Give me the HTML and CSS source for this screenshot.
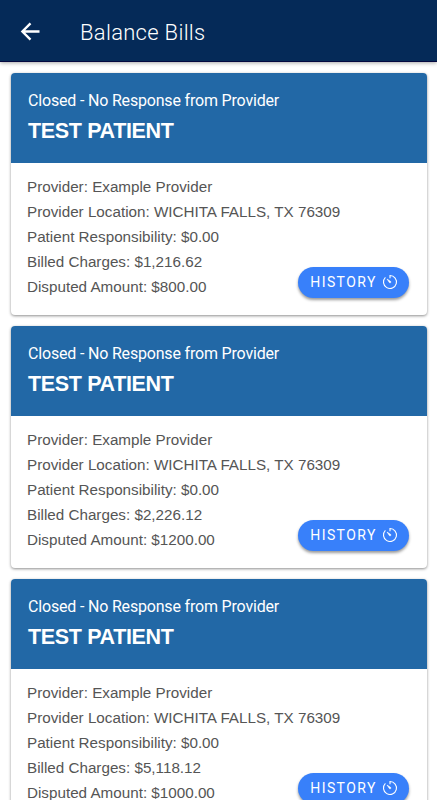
FILE: index.html
```html
<!DOCTYPE html>
<html lang="en">
<head>
<meta charset="utf-8">
<title>Balance Bills</title>
<link rel="stylesheet" href="styles.css">
</head>
<body>
<header class="bar">
  <svg class="back" viewBox="0 0 24 24"><path d="M20 12H5M12 4.8 4.8 12l7.2 7.2"/></svg>
  <h1>Balance Bills</h1>
</header>
<main class="list">
  <article class="card">
    <div class="head"><p>Closed - No Response from Provider</p><h2>TEST PATIENT</h2></div>
    <div class="body">
      <p>Provider: Example Provider</p><p>Provider Location: WICHITA FALLS, TX 76309</p><p>Patient Responsibility: $0.00</p><p>Billed Charges: $1,216.62</p><p>Disputed Amount: $800.00</p>
      <button class="history">HISTORY <svg viewBox="0 0 16 16"><path d="M8 4.2V1.5A6.5 6.5 0 1 1 3.4 3.4"/><path class="hand" d="M5 5l3.8 2.6a.9.9 0 0 1-1.2 1.2z"/></svg></button>
    </div>
  </article>
  <article class="card">
    <div class="head"><p>Closed - No Response from Provider</p><h2>TEST PATIENT</h2></div>
    <div class="body">
      <p>Provider: Example Provider</p><p>Provider Location: WICHITA FALLS, TX 76309</p><p>Patient Responsibility: $0.00</p><p>Billed Charges: $2,226.12</p><p>Disputed Amount: $1200.00</p>
      <button class="history">HISTORY <svg viewBox="0 0 16 16"><path d="M8 4.2V1.5A6.5 6.5 0 1 1 3.4 3.4"/><path class="hand" d="M5 5l3.8 2.6a.9.9 0 0 1-1.2 1.2z"/></svg></button>
    </div>
  </article>
  <article class="card">
    <div class="head"><p>Closed - No Response from Provider</p><h2>TEST PATIENT</h2></div>
    <div class="body">
      <p>Provider: Example Provider</p><p>Provider Location: WICHITA FALLS, TX 76309</p><p>Patient Responsibility: $0.00</p><p>Billed Charges: $5,118.12</p><p>Disputed Amount: $1000.00</p>
      <button class="history">HISTORY <svg viewBox="0 0 16 16"><path d="M8 4.2V1.5A6.5 6.5 0 1 1 3.4 3.4"/><path class="hand" d="M5 5l3.8 2.6a.9.9 0 0 1-1.2 1.2z"/></svg></button>
    </div>
  </article>
</main>
</body>
</html>
```
FILE: styles.css
```css
* { box-sizing: border-box; margin: 0; }
body { height: 800px; overflow: hidden; background: #fff; font-family: Roboto, sans-serif; }
.bar { height: 62px; background: #052a58; color: #fff; display: flex; align-items: center; padding-left: 17px; border-bottom: 1px solid #03083f; box-shadow: 0 1px 4px rgba(0,0,0,.35); }
.back { width: 27px; height: 27px; fill: none; stroke: #fff; stroke-width: 2.1; margin-top: 1px; }
h1 { font-size: 22px; font-weight: 300; letter-spacing: .3px; margin: 3px 0 0 36px; }
.list { padding: 11px 10px 0 11px; }
.card { height: 242px; margin-bottom: 11px; border-radius: 4px; background: #fff; box-shadow: 0 1px 3px rgba(0,0,0,.45); overflow: hidden; }
.head { height: 90px; background: #2268a6; color: #fff; padding: 17px 17px 0; }
.head p { font-size: 16px; line-height: 22px; letter-spacing: -.18px; }
.head h2 { font-family: "Liberation Sans", Arial, sans-serif; font-size: 21.5px; line-height: 26px; margin-top: 6px; letter-spacing: -.35px; }
.body { position: relative; padding: 12px 16px; font-family: "Liberation Sans", Arial, sans-serif; font-size: 15.22px; line-height: 24.9px; color: #555; }
.history { position: absolute; right: 18px; top: 104px; width: 111px; height: 31px; border: 0; border-radius: 16px; background: #3880fa; color: #fff; font: 14px Roboto, sans-serif; letter-spacing: 1.4px; display: flex; align-items: center; justify-content: center; gap: 5px; padding: 0 0 1px 1px; box-shadow: 0 2px 3px rgba(0,0,0,.4); }
.history svg { width: 16px; height: 16px; fill: none; stroke: #fff; stroke-width: 1.1; }
.history .hand { fill: #fff; stroke-width: .6; }
```
